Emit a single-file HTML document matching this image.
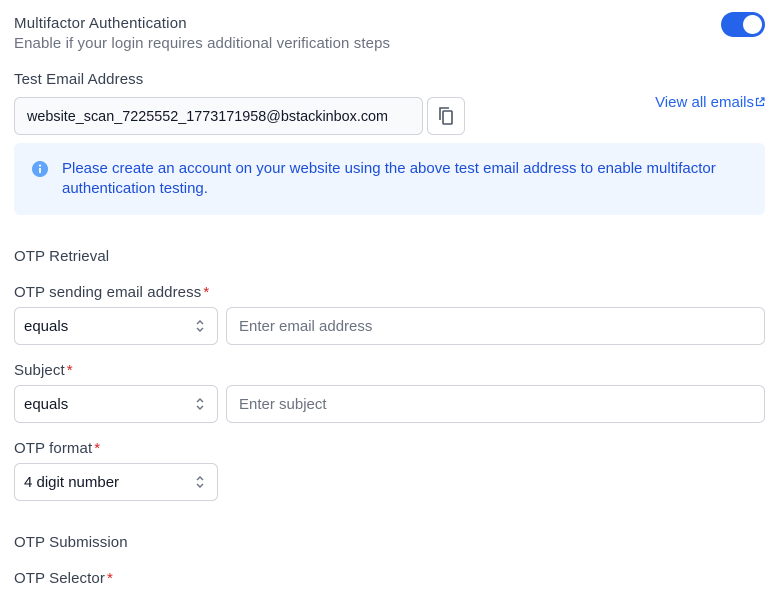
<!DOCTYPE html>
<html><head><meta charset="utf-8"><style>
*{box-sizing:border-box;margin:0;padding:0}
body{width:780px;height:590px;background:#fff;font-family:"Liberation Sans",sans-serif;font-size:15px;color:#374151;position:relative;overflow:hidden}
.a{position:absolute;white-space:nowrap}
.lbl{font-size:15px;color:#374151;line-height:20px;letter-spacing:0.1px}
.req{color:#dc2626;margin-left:2px}
.box{position:absolute;border:1px solid #d1d5db;border-radius:6px;background:#fff}
.sel{font-size:15px;color:#111827;padding-left:9px;line-height:37px}
.ph{color:#6b7280;padding-left:12px;line-height:37px;font-size:15px}
.chev{position:absolute;right:12px;top:9px}
</style></head><body>
<div class="a lbl" style="left:14px;top:14px;letter-spacing:0.2px">Multifactor Authentication</div>
<div class="a" style="left:14px;top:34px;color:#6b7280;line-height:20px;letter-spacing:0.1px">Enable if your login requires additional verification steps</div>
<div class="a" style="left:721px;top:12px;width:44px;height:25px;border-radius:13px;background:#2563eb"><div style="position:absolute;right:3px;top:3px;width:19px;height:19px;border-radius:50%;background:#fff"></div></div>
<div class="a lbl" style="left:14px;top:70px">Test Email Address</div>
<div class="box" style="left:14px;top:97px;width:409px;height:38px;background:#f9fafb"><div style="padding-left:12px;line-height:38px;color:#111827;font-size:14.4px">website_scan_7225552_1773171958@bstackinbox.com</div></div>
<div class="box" style="left:427px;top:97px;width:38px;height:38px">
<svg width="18" height="20" viewBox="0 0 18 20" style="position:absolute;left:10px;top:8px" fill="none" stroke="#4b5563" stroke-width="1.6"><path d="M2 14V2h9"/><rect x="5" y="5" width="9" height="13" rx="1"/></svg></div>
<div class="a" style="right:15px;top:93px;color:#2563eb;line-height:20px">View all emails<svg width="10" height="10" viewBox="0 0 10 10" fill="none" stroke="#2563eb" stroke-width="1.2" style="margin-left:1px"><path d="M4 1.5H1.5v7h7V6M6 1h3v3M9 1L4.5 5.5"/></svg></div>
<div class="a" style="left:14px;top:143px;width:751px;height:72px;background:#eff6ff;border-radius:6px">
<svg width="16" height="16" viewBox="0 0 16 16" style="position:absolute;left:18px;top:18px"><circle cx="8" cy="8" r="8" fill="#60a5fa"/><rect x="7.1" y="7" width="1.8" height="5" fill="#fff"/><circle cx="8" cy="4.6" r="1.1" fill="#fff"/></svg>
<div style="position:absolute;left:48px;top:16px;color:#1d4ed8;line-height:20px;white-space:normal;width:690px">Please create an account on your website using the above test email address to enable multifactor authentication testing.</div></div>
<div class="a lbl" style="left:14px;top:247px">OTP Retrieval</div>
<div class="a lbl" style="left:14px;top:283px">OTP sending email address<span class="req">*</span></div>
<div class="box" style="left:14px;top:307px;width:204px;height:38px"><div class="sel">equals</div><svg class="chev" width="10" height="18" viewBox="0 0 10 18" fill="none" stroke="#6b7280" stroke-width="1.4"><path d="M2 7l3-3 3 3M2 11l3 3 3-3"/></svg></div>
<div class="box" style="left:226px;top:307px;width:539px;height:38px"><div class="ph">Enter email address</div></div>
<div class="a lbl" style="left:14px;top:361px">Subject<span class="req">*</span></div>
<div class="box" style="left:14px;top:385px;width:204px;height:38px"><div class="sel">equals</div><svg class="chev" width="10" height="18" viewBox="0 0 10 18" fill="none" stroke="#6b7280" stroke-width="1.4"><path d="M2 7l3-3 3 3M2 11l3 3 3-3"/></svg></div>
<div class="box" style="left:226px;top:385px;width:539px;height:38px"><div class="ph">Enter subject</div></div>
<div class="a lbl" style="left:14px;top:439px">OTP format<span class="req">*</span></div>
<div class="box" style="left:14px;top:463px;width:204px;height:38px"><div class="sel">4 digit number</div><svg class="chev" width="10" height="18" viewBox="0 0 10 18" fill="none" stroke="#6b7280" stroke-width="1.4"><path d="M2 7l3-3 3 3M2 11l3 3 3-3"/></svg></div>
<div class="a lbl" style="left:14px;top:533px">OTP Submission</div>
<div class="a lbl" style="left:14px;top:569px">OTP Selector<span class="req">*</span></div>
</body></html>
